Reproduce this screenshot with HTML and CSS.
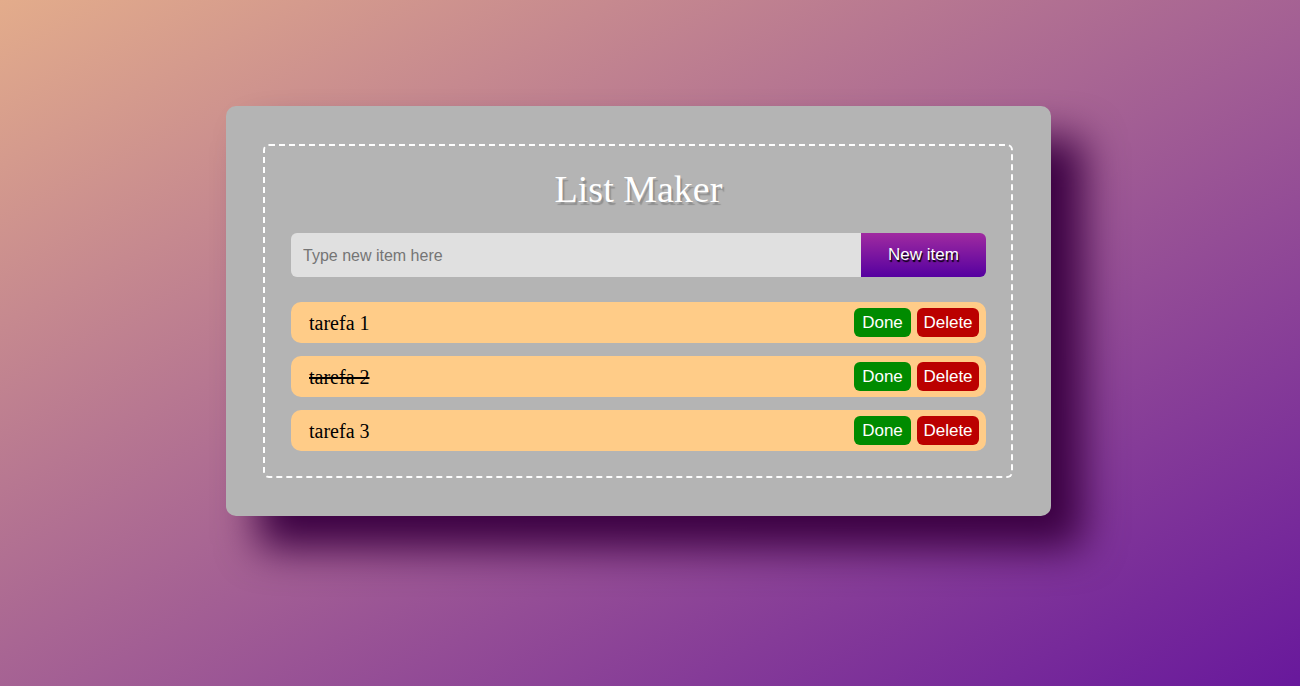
FILE: index.html
```html
<!DOCTYPE html>
<html lang="en">
<head>
  <meta charset="utf-8">
  <title>List Maker</title>
  <link rel="stylesheet" href="styles.css">
</head>
<body>
  <main class="card">
    <section class="board">
      <h1 class="title">List Maker</h1>
      <form class="entry">
        <input class="entry-text" type="text" placeholder="Type new item here" aria-label="New item">
        <button class="entry-add" type="button">New item</button>
      </form>
      <ul class="items">
        <li class="item"><span class="item-name">tarefa 1</span><button class="action done" type="button">Done</button><button class="action delete" type="button">Delete</button></li>
        <li class="item"><span class="item-name struck">tarefa 2</span><button class="action done" type="button">Done</button><button class="action delete" type="button">Delete</button></li>
        <li class="item"><span class="item-name">tarefa 3</span><button class="action done" type="button">Done</button><button class="action delete" type="button">Delete</button></li>
      </ul>
    </section>
  </main>
</body>
</html>
```
FILE: styles.css
```css
* {
  box-sizing: border-box;
}

body {
  display: flex;
  align-items: center;
  justify-content: center;
  min-height: 100vh;
  margin: 0;
  padding: 0 23px 64px 0;
  background: linear-gradient(to bottom right, #e3ac8b, #68189c);
  font-family: "Liberation Serif", "Times New Roman", serif;
}

.card {
  width: 100%;
  max-width: 825px;
  padding: 38px 38px 38px 37px;
  border-radius: 10px;
  background: #b4b4b4;
  box-shadow: 32px 32px 40px #3b0042;
}

.board {
  padding: 22px 25px 25px 26px;
  border: 2px dashed #fff;
  border-radius: 6px;
}

.title {
  margin: 0 0 23px;
  color: #fff;
  font-size: 38px;
  font-weight: 400;
  line-height: 42px;
  text-align: center;
  text-shadow: 2px 3px 1px #909090;
}

.entry {
  display: flex;
  height: 44px;
  margin: 0 0 25px;
}

.entry-text {
  flex: 1;
  min-width: 0;
  padding: 2px 12px 0;
  border: 0;
  border-radius: 6px 0 0 6px;
  background: #e0e0e0;
  font: 16px "Liberation Sans", Arial, sans-serif;
}

.entry-text::placeholder {
  color: #757575;
}

.entry-add {
  width: 125px;
  padding: 0;
  border: 0;
  border-radius: 0 6px 6px 0;
  background: linear-gradient(#a02ba0, #5500a0);
  color: #fff;
  font: 17px "Liberation Sans", Arial, sans-serif;
  text-shadow: 1px 2px 1px #000;
}

.items {
  display: grid;
  gap: 13px;
  margin: 0;
  padding: 0;
  list-style: none;
}

.item {
  display: flex;
  align-items: center;
  gap: 6px;
  height: 41px;
  padding: 0 7px 0 18px;
  border-radius: 10px;
  background: #ffcc88;
}

.item-name {
  margin-right: auto;
  color: #000;
  font-size: 20px;
  line-height: 24px;
}

.struck {
  text-decoration: line-through 2px;
}

.action {
  height: 29px;
  padding: 0;
  border: 0;
  border-radius: 6px;
  color: #fff;
  font: 17px "Liberation Sans", Arial, sans-serif;
}

.done {
  width: 57px;
  background: #008b00;
}

.delete {
  width: 62px;
  background: #bb0000;
}
```
